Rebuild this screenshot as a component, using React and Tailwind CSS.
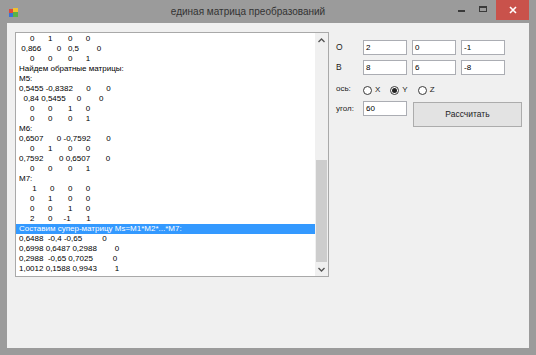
import React from "react";

const FS = 8;
const CW = { ",": 0.278, " ": 0.278, "-": 0.333, ".": 0.278 };
const cw = (c) => (CW[c] !== undefined ? CW[c] : 0.556) * FS;
const tw = (t) => [...t].reduce((a, c) => a + cw(c), 0);
const SP = 0.278 * FS;
const X0 = 19;

function pad(tokens) {
  let s = "";
  let cur = X0;
  tokens.forEach(([x, t], i) => {
    let n = Math.round((x - cur) / SP);
    if (i > 0) n = Math.max(1, n);
    else n = Math.max(0, n);
    s += " ".repeat(n);
    cur += n * SP;
    s += t;
    cur += tw(t);
  });
  return s;
}

const c4 = (a, b, c, d, cols = [31, 49, 67, 86]) => [
  [cols[0], a],
  [cols[1], b],
  [cols[2], c],
  [cols[3], d],
];

const ROWS = [
  { t: pad(c4("0", "1", "0", "0")) },
  { t: pad([[21, "0,866"], [57, "0"], [67, "0,5"], [97, "0"]]) },
  { t: pad(c4("0", "0", "0", "1")) },
  { t: "Найдем обратные матрицы:" },
  { t: "M5:" },
  { t: pad([[19, "0,5455"], [44, "-0,8382"], [87, "0"], [107, "0"]]) },
  { t: pad([[23, "0,84"], [41, "0,5455"], [77, "0"], [98, "0"]]) },
  { t: pad(c4("0", "0", "1", "0")) },
  { t: pad(c4("0", "0", "0", "1")) },
  { t: "M6:" },
  { t: pad([[19, "0,6507"], [57, "0"], [63, "-0,7592"], [107, "0"]]) },
  { t: pad(c4("0", "1", "0", "0")) },
  { t: pad([[19, "0,7592"], [58, "0"], [64, "0,6507"], [106, "0"]]) },
  { t: pad(c4("0", "0", "0", "1")) },
  { t: "M7:" },
  { t: pad(c4("1", "0", "0", "0", [32, 50, 68, 86])) },
  { t: pad(c4("0", "1", "0", "0")) },
  { t: pad(c4("0", "0", "1", "0")) },
  { t: pad([[31, "2"], [49, "0"], [64, "-1"], [86, "1"]]) },
  { t: "Составим супер-матрицу Мs=M1*M2*...*M7:", sel: true },
  { t: pad([[19, "0,6488"], [48, "-0,4"], [65, "-0,65"], [103, "0"]]) },
  { t: pad([[19, "0,6998"], [46, "0,6487"], [72, "0,2988"], [115, "0"]]) },
  { t: pad([[19, "0,2988"], [48, "-0,65"], [67, "0,7025"], [112, "0"]]) },
  { t: pad([[19, "1,0012"], [46, "0,1588"], [72, "0,9943"], [115, "1"]]) },
];

const font = { fontFamily: "'Liberation Sans', Arial, sans-serif" };

function Box({ v }) {
  return (
    <div className="w-[44px] h-[15px] border border-[#abadb3] bg-white pl-[2px] pt-[1px] text-[8px] leading-[11px] text-black">
      {v}
    </div>
  );
}

function Radio({ label, checked }) {
  return (
    <div className="flex items-center gap-[3px]">
      <div className="w-[9px] h-[9px] rounded-full border border-[#3a3a3a] bg-white flex items-center justify-center">
        {checked && <div className="w-[5px] h-[5px] rounded-full bg-[#222]" />}
      </div>
      <span className="text-[8px] leading-[10px] text-[#222]">{label}</span>
    </div>
  );
}

export default function App() {
  return (
    <div
      className="w-[536px] h-[355px] bg-[#9b9b9b] flex flex-col overflow-hidden"
      style={font}
    >
      {/* title bar */}
      <div className="h-[23px] flex items-start relative shrink-0">
        <div className="pl-[9px] pt-[8px]">
          <svg width="9" height="9" viewBox="0 0 9 9">
            <rect x="0" y="1" width="4" height="4" fill="#e04a3c" />
            <rect x="4" y="0" width="5" height="4" fill="#f2c12e" />
            <rect x="0" y="5" width="4" height="4" fill="#3b73d6" />
            <rect x="4" y="4" width="5" height="5" fill="#58b347" />
          </svg>
        </div>
        <div className="flex-1 text-center text-[10px] leading-[23px] text-[#333] pl-[28px]">
          единая матрица преобразований
        </div>
        <div className="flex items-start">
          <div className="w-[22px] h-[20px] flex items-center justify-center">
            <div className="w-[7px] h-[2px] bg-[#3a3a3a] mt-[2px]" />
          </div>
          <div className="w-[22px] h-[20px] flex items-start justify-center pt-[6px] mr-[2px]">
            <div className="w-[8px] h-[6px] border border-[#3a3a3a] border-t-2" />
          </div>
          <div className="w-[33px] h-[20px] bg-[#c9524b] flex items-center justify-center mr-[7px]">
            <svg width="8" height="8" viewBox="0 0 8 8">
              <path d="M1 1 L7 7 M7 1 L1 7" stroke="#fff" strokeWidth="1.6" />
            </svg>
          </div>
        </div>
      </div>

      {/* client */}
      <div className="flex-1 mx-[7px] mb-[7px] bg-[#f0f0f0] flex items-start pl-[8px] pt-[9px]">
        {/* list box */}
        <div className="w-[314px] h-[245px] border border-[#a9a9a9] bg-white flex shrink-0">
          <div className="flex-1 pt-[1px] overflow-hidden">
            {ROWS.map((r, i) => (
              <div
                key={i}
                className={
                  "h-[10px] text-[8px] leading-[10px] whitespace-pre pl-[3px] " +
                  (r.sel ? "bg-[#3399ff] text-white" : "text-black")
                }
              >
                {r.t}
              </div>
            ))}
          </div>
          {/* scrollbar */}
          <div className="w-[13px] bg-[#f0f0f0] flex flex-col items-center">
            <div className="h-[14px] flex items-center justify-center">
              <svg width="7" height="5" viewBox="0 0 7 5">
                <path d="M0.5 4 L3.5 1 L6.5 4" stroke="#555" strokeWidth="1.4" fill="none" />
              </svg>
            </div>
            <div className="flex-1 w-full flex flex-col justify-end px-[1px]">
              <div className="h-[102px] w-full bg-[#cdcdcd]" />
            </div>
            <div className="h-[14px] flex items-center justify-center">
              <svg width="7" height="5" viewBox="0 0 7 5">
                <path d="M0.5 1 L3.5 4 L6.5 1" stroke="#555" strokeWidth="1.4" fill="none" />
              </svg>
            </div>
          </div>
        </div>

        {/* right panel */}
        <div className="ml-[7px] pt-[8px] flex flex-col text-[#222]">
          <div className="flex items-center h-[15px]">
            <span className="w-[27px] text-[8.5px] leading-[10px] -mt-[2px]">О</span>
            <div className="flex gap-[5px]">
              <Box v="2" />
              <Box v="0" />
              <Box v="-1" />
            </div>
          </div>
          <div className="flex items-center h-[15px] mt-[5px]">
            <span className="w-[27px] text-[8.5px] leading-[10px] -mt-[2px]">В</span>
            <div className="flex gap-[5px]">
              <Box v="8" />
              <Box v="6" />
              <Box v="-8" />
            </div>
          </div>
          <div className="flex items-center h-[12px] mt-[9px]">
            <span className="w-[27px] text-[8px] leading-[10px] -mt-[3px]">ось:</span>
            <div className="flex gap-[10px]">
              <Radio label="X" />
              <Radio label="Y" checked />
              <Radio label="Z" />
            </div>
          </div>
          <div className="flex items-start mt-[5px]">
            <span className="w-[27px] text-[8px] leading-[10px] mt-[3px]">угол:</span>
            <div className="w-[44px] h-[15px] border border-[#abadb3] bg-white pl-[2px] pt-[1px] text-[8px] leading-[11px] text-black">
              60
            </div>
            <div className="ml-[6px] mt-[1px] w-[109px] h-[25px] border border-[#acacac] bg-[#e3e3e3] flex items-center justify-center text-[8.5px] text-[#222]">
              Рассчитать
            </div>
          </div>
        </div>
      </div>
    </div>
  );
}
